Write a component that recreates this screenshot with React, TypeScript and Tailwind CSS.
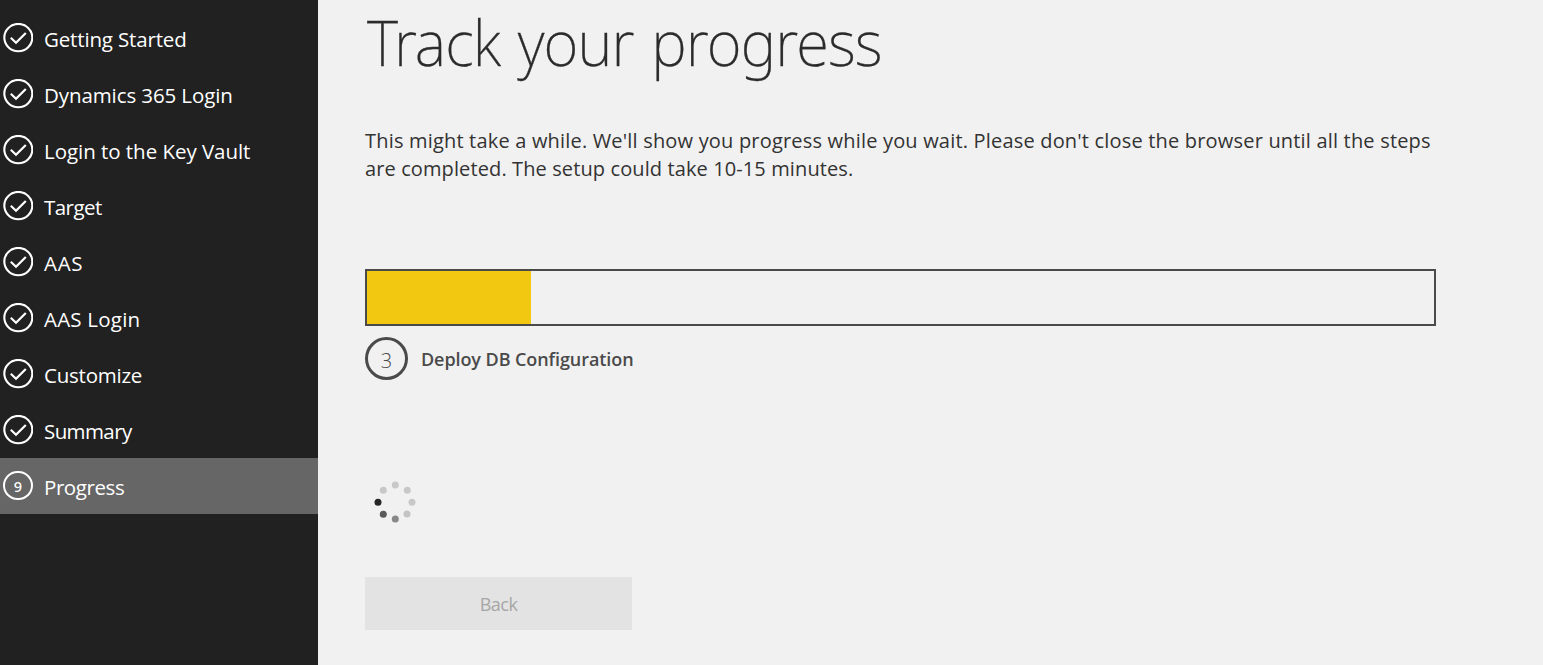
const steps = [
  { label: "Getting Started", spacing: "tracking-[-0.16px]" },
  { label: "Dynamics 365 Login", spacing: "tracking-[-0.1px]" },
  { label: "Login to the Key Vault", spacing: "tracking-[-0.04px]" },
  { label: "Target", spacing: "tracking-[-0.55px]" },
  { label: "AAS", spacing: "tracking-[0.7px]" },
  { label: "AAS Login", spacing: "tracking-[0.22px]" },
  { label: "Customize", spacing: "tracking-[-0.23px]" },
  { label: "Summary", spacing: "tracking-[-0.6px]" },
  { label: "Progress", spacing: "tracking-[-0.42px]" },
];

const dots = [
  { x: 40.3, y: 15, fill: "#c8c8c8" },
  { x: 52.3, y: 20.3, fill: "#c8c8c8" },
  { x: 57, y: 32.3, fill: "#c8c8c8" },
  { x: 52, y: 44, fill: "#c4c4c4" },
  { x: 40.3, y: 49, fill: "#888888" },
  { x: 28.3, y: 44.3, fill: "#5a5a5a" },
  { x: 23, y: 32.3, fill: "#262626" },
  { x: 28.3, y: 20.3, fill: "#c8c8c8" },
];

function CheckIcon() {
  return (
    <svg className="size-[30px] shrink-0" viewBox="0 0 30 30" fill="none" stroke="white">
      <ellipse cx="15.3" cy="14.6" rx="14" ry="13.7" strokeWidth="2.1" />
      <path d="M7.8 14.8 L13 19.8 L22.8 9.9" strokeWidth="2.2" />
    </svg>
  );
}

function NumberIcon({ value }: { value: number }) {
  return (
    <span className="flex h-[29px] w-[30px] shrink-0 items-center justify-center rounded-full border-2 border-white pt-px font-['Noto_Sans',sans-serif] text-[14.5px] font-medium leading-none">
      {value}
    </span>
  );
}

function Spinner() {
  return (
    <svg className="h-[64px] w-[80px]" viewBox="0 0 80 64">
      {dots.map((d, i) => (
        <circle key={i} cx={d.x} cy={d.y} r="3.5" fill={d.fill} />
      ))}
    </svg>
  );
}

export default function App() {
  return (
    <div className="flex h-[665px] w-[1543px] overflow-hidden bg-[#f1f1f1] font-['Open_Sans','Noto_Sans',sans-serif]">
      <nav className="w-[318px] shrink-0 bg-[#212121] pt-[10px] text-white">
        {steps.map((s, i) => {
          const active = i === steps.length - 1;
          return (
            <div key={s.label} className={`flex h-14 gap-[11px] pl-[3px] ${active ? "bg-[#666666]" : ""}`}>
              <div className="pt-[13px]">{active ? <NumberIcon value={i + 1} /> : <CheckIcon />}</div>
              <div className="pt-[15px] text-[20.5px] leading-[28px]">
                <span className={`whitespace-nowrap ${s.spacing}`}>{s.label}</span>
              </div>
            </div>
          );
        })}
      </nav>
      <main className="flex flex-1 flex-col items-start pl-[47px]">
        <h1 className="h-[127px] origin-left scale-x-[0.952] whitespace-nowrap pl-[2px] font-['Noto_Sans','Open_Sans',sans-serif] text-[63px] font-extralight leading-[84px] tracking-[-0.9px] text-[#2b2b2b] [-webkit-text-stroke:0.3px_#2b2b2b] [word-spacing:3px]">
          Track your progress
        </h1>
        <div className="h-[142px] whitespace-nowrap text-[20px] leading-[28px] text-[#333333]">
          <p className="tracking-[0.185px]">This might take a while. We'll show you progress while you wait. Please don't close the browser until all the steps</p>
          <p className="tracking-[0.11px]">are completed. The setup could take 10-15 minutes.</p>
        </div>
        <div className="h-[57px] w-[1071px] border-2 border-[#4a4a4a]">
          <div className="h-full w-[164px] bg-[#f2c811]" />
        </div>
        <div className="mt-[11px] flex h-[43px] items-center gap-[13px] text-[#4a4a4a]">
          <div className="flex size-[43px] items-center justify-center rounded-full border-3 border-[#4a4a4a] pt-1 text-[20px] font-light leading-none">
            3
          </div>
          <span className="whitespace-nowrap text-[18px] font-semibold leading-[28px] tracking-[-0.08px]">Deploy DB Configuration</span>
        </div>
        <div className="-ml-[10px] mt-[90px]">
          <Spinner />
        </div>
        <button disabled className="mt-[43px] h-[53px] w-[267px] bg-[#e3e3e3] pt-[2px] text-[18px] tracking-[-0.5px] text-[#a6a6a6]">
          Back
        </button>
      </main>
    </div>
  );
}
